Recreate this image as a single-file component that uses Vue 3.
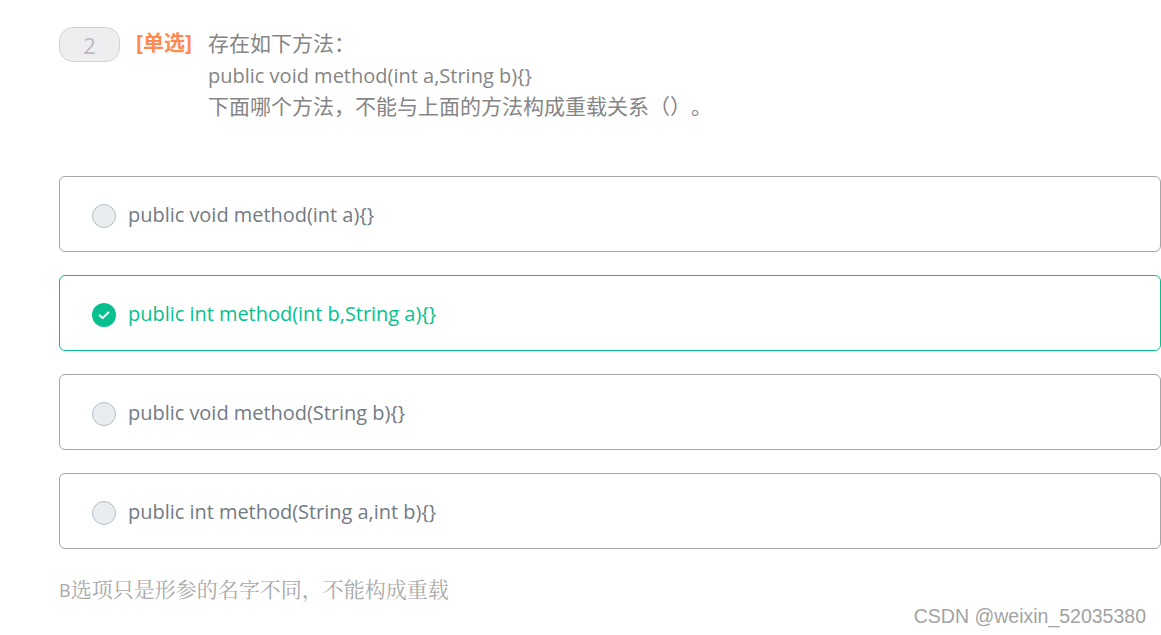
<template>
  <main class="page">
    <section class="question">
      <div class="num">2</div>
      <div class="tag">[单选]</div>
      <div class="stem">
        <p class="zh">存在如下方法：</p>
        <p>public void method(int a,String b){}</p>
        <p class="zh">下面哪个方法，不能与上面的方法构成重载关系（）。</p>
      </div>
    </section>

    <ul class="options">
      <li v-for="opt in options" :key="opt.text" class="option" :class="{ selected: opt.selected }">
        <span class="radio">
          <svg v-if="opt.selected" width="24" height="24" viewBox="0 0 24 24">
            <circle cx="12" cy="12" r="12" fill="#07c08e" />
            <path d="M7.6 12.2l3 2.9 5.8-5.6" fill="none" stroke="#fff" stroke-width="2" stroke-linecap="round" stroke-linejoin="round" />
          </svg>
        </span>
        <span class="label">{{ opt.text }}</span>
      </li>
    </ul>

    <p class="note"><span class="note-b">B</span>选项只是形参的名字不同，不能构成重载</p>
    <div class="mark">CSDN @weixin_52035380</div>
  </main>
</template>

<script setup>
import { ref } from 'vue'

const options = ref([
  { text: 'public void method(int a){}', selected: false },
  { text: 'public int method(int b,String a){}', selected: true },
  { text: 'public void method(String b){}', selected: false },
  { text: 'public int method(String a,int b){}', selected: false }
])
</script>

<style>
html, body {
  background: #fff;
  overflow: hidden;
}
</style>

<style scoped>
* {
  margin: 0;
  padding: 0;
  box-sizing: border-box;
}

.page {
  position: relative;
  height: 635px;
  padding: 27px 0 0 59px;
  font-family: "Open Sans", "Noto Sans CJK SC", sans-serif;
  text-spacing-trim: space-all;
}

.question {
  display: flex;
  align-items: flex-start;
  height: 149px;
}

.num {
  width: 61px;
  height: 35px;
  border: 1px solid #d4d2d4;
  border-radius: 14px;
  background: #eeedef;
  color: #bdb8c2;
  font-size: 22px;
  line-height: 35px;
  text-align: center;
}

.tag {
  margin-left: 16px;
  width: 72px;
  color: #ff8a50;
  font-size: 21px;
  font-weight: 700;
  line-height: 31px;
  white-space: nowrap;
}

.stem {
  color: #858585;
  font-size: 20px;
  line-height: 31.5px;
  margin-top: 1px;
}

.stem p {
  height: 31.5px;
  white-space: nowrap;
}

.stem .zh {
  font-size: 21px;
  line-height: 30px;
}

.options {
  list-style: none;
  display: flex;
  flex-direction: column;
  gap: 23px;
}

.option {
  display: flex;
  align-items: center;
  gap: 12px;
  height: 76px;
  padding-left: 32px;
  border: 1px solid #a5a5a5;
  border-radius: 6px;
  color: #737b84;
  font-size: 20px;
  letter-spacing: -0.03px;
}

.option.selected {
  border-color: #07c08e;
  color: #07c08e;
}

.radio {
  display: block;
  width: 24px;
  height: 24px;
  margin-top: 4px;
  border: 1px solid #b4bcc6;
  border-radius: 50%;
  background: #e9edf0;
}

.selected .radio {
  border: 0;
  background: none;
}

.radio svg {
  display: block;
}

.note {
  margin-top: 25px;
  color: #a8a8a8;
  font-family: "Noto Serif CJK SC", "Noto Sans CJK SC", serif;
  font-size: 21px;
  line-height: 28px;
  white-space: nowrap;
}

.note-b {
  font-family: "Open Sans", sans-serif;
  font-size: 18px;
}

.mark {
  position: absolute;
  right: 15px;
  top: 604px;
  color: #a3a3a3;
  font-family: "Liberation Sans", sans-serif;
  font-size: 19.5px;
  line-height: 24px;
  white-space: nowrap;
}
</style>
